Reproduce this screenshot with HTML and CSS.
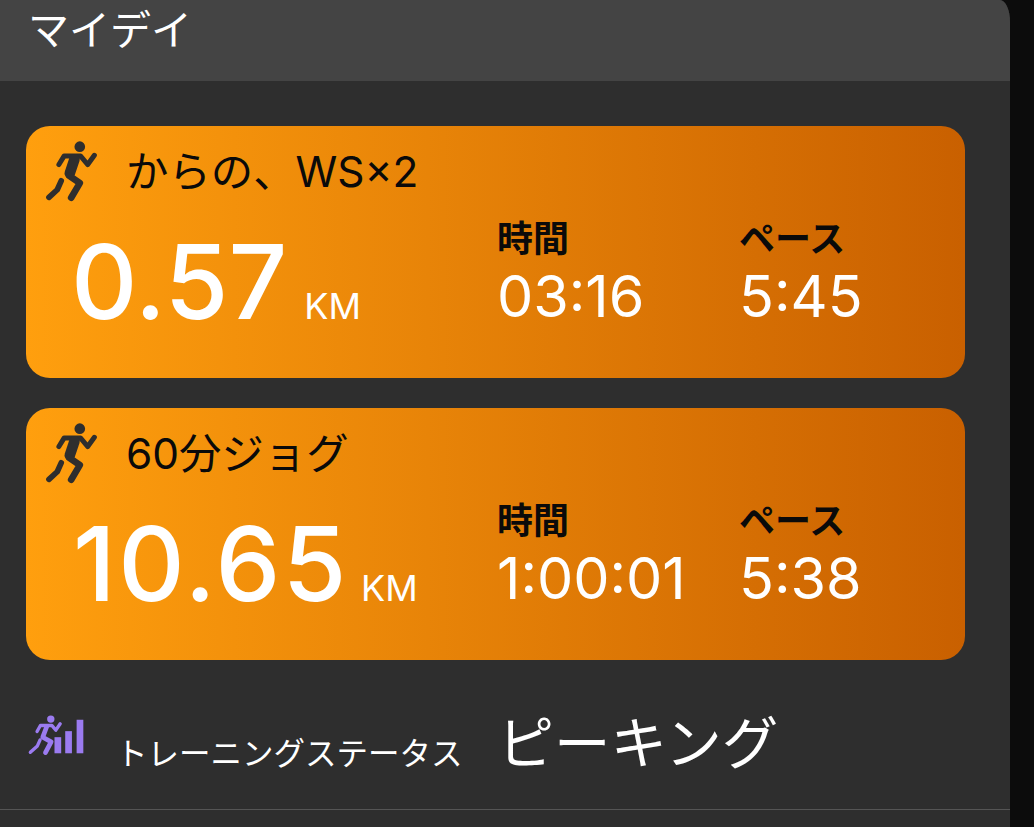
FILE: index.html
```html
<!DOCTYPE html>
<html lang="ja">
<head>
<meta charset="utf-8">
<title>マイデイ</title>
<link rel="stylesheet" href="styles.css">
</head>
<body>
<main class="panel">
  <header class="panel-head">マイデイ</header>
  <section class="cards">
    <article class="card">
      <div class="card-title">
        <svg class="run-icon" viewBox="70 60 170 190"><circle cx="180" cy="80" r="16" fill="#2e2e2e"/><path class="run-limb thin" d="M117 134 L133 108 L182 108 L204 134 L224 106"/><path class="run-limb torso" d="M164 118 L150 160"/><path class="run-limb thick" d="M148 168 L180 190 L154 234"/><path class="run-limb mid" d="M124 183 L112 210 L87 233"/></svg>
        <span>からの、WS×2</span>
      </div>
      <div class="stats">
        <div class="distance"><span class="big">0.57</span><span class="unit">KM</span></div>
        <div class="stat"><div class="label">時間</div><div class="value">03:16</div></div>
        <div class="stat"><div class="label">ペース</div><div class="value">5:45</div></div>
      </div>
    </article>
    <article class="card">
      <div class="card-title">
        <svg class="run-icon" viewBox="70 60 170 190"><circle cx="180" cy="80" r="16" fill="#2e2e2e"/><path class="run-limb thin" d="M117 134 L133 108 L182 108 L204 134 L224 106"/><path class="run-limb torso" d="M164 118 L150 160"/><path class="run-limb thick" d="M148 168 L180 190 L154 234"/><path class="run-limb mid" d="M124 183 L112 210 L87 233"/></svg>
        <span>60分ジョグ</span>
      </div>
      <div class="stats">
        <div class="distance"><span class="big big-long">10.65</span><span class="unit">KM</span></div>
        <div class="stat"><div class="label">時間</div><div class="value">1:00:01</div></div>
        <div class="stat"><div class="label">ペース</div><div class="value">5:38</div></div>
      </div>
    </article>
  </section>
  <section class="status">
    <svg class="status-icon" viewBox="84 70 170 125"><circle cx="152" cy="88" r="11" fill="#9b7bf0"/><path class="status-limb" d="M111 125 L121 107 L155 107 L167 121 L180 102"/><path class="status-limb wide" d="M140 110 L128 142 L153 156 L136 188"/><path class="status-limb" d="M120 150 L112 168 L91 187"/><rect x="163" y="142" width="20" height="48" fill="#9b7bf0"/><rect x="195" y="124" width="20" height="66" fill="#9b7bf0"/><rect x="229" y="90" width="20" height="100" fill="#9b7bf0"/></svg>
    <span class="status-label">トレーニングステータス</span>
    <span class="status-value">ピーキング</span>
  </section>
</main>
</body>
</html>
```
FILE: styles.css
```css
* { box-sizing: border-box; }
html, body { margin: 0; height: 100%; overflow: hidden; background: #0c0c0c; }
body {
  font-family: Inter, "Noto Sans CJK JP", sans-serif;
}
.panel {
  width: 1010px;
  height: 827px;
  background: #2e2e2e;
  border-top-right-radius: 10px 22px;
  overflow: hidden;
  display: flex;
  flex-direction: column;
}
.panel-head {
  height: 81px;
  flex: none;
  background: #444444;
  color: #fff;
  font-family: "Noto Sans CJK JP", sans-serif;
  font-size: 41px;
  line-height: 50px;
  padding: 2px 0 0 28px;
}
.cards {
  display: flex;
  flex-direction: column;
  gap: 30px;
  padding: 45px 45px 0 26px;
}
.card {
  height: 252px;
  border-radius: 24px;
  background: linear-gradient(90deg, #ff9f0e 0%, #c96000 100%);
  padding: 12px 0 0 17px;
}
.card-title {
  display: flex;
  align-items: center;
  gap: 26px;
  height: 66px;
  color: #0a0a0a;
  font-size: 42.4px;
}
.card-title span { margin-top: -5px; }
.run-icon { width: 57px; height: 63px; flex: none; overflow: visible; }
.run-limb { fill: none; stroke: #2e2e2e; stroke-linecap: round; stroke-linejoin: round; }
.run-limb.thin { stroke-width: 15px; }
.run-limb.thick { stroke-width: 20px; }
.run-limb.mid { stroke-width: 17px; }
.run-limb.torso { stroke-width: 32px; }
.stats {
  display: grid;
  grid-template-columns: 455px 242px 1fr;
  margin-top: 16px;
}
.distance {
  display: flex;
  align-items: baseline;
  padding-left: 28px;
  color: #fff;
}
.big { font-size: 103px; font-weight: 500; line-height: 124px; }
.big-long { letter-spacing: 2.5px; margin: 0 -5px 0 2px; }
.unit { font-size: 36px; font-weight: 400; margin-left: 17px; }
.stat { color: #fff; }
.label {
  color: #0a0a0a;
  font-family: "Noto Sans CJK JP", sans-serif;
  font-size: 36px;
  font-weight: 700;
  line-height: 44px;
  margin: -6px 0 0 -1px;
}
.value { font-size: 57.5px; font-weight: 400; line-height: 68px; margin: 4px 0 0 -1px; }
.status {
  height: 150px;
  flex: none;
  display: flex;
  align-items: flex-start;
  border-bottom: 1px solid #555555;
  padding: 53px 0 0 28px;
}
.status-icon { width: 57px; height: 42px; flex: none; overflow: visible; }
.status-limb { fill: none; stroke: #9b7bf0; stroke-width: 10px; stroke-linecap: round; stroke-linejoin: round; }
.status-limb.wide { stroke-width: 14px; }
.status-label {
  color: #fff;
  font-family: "Noto Sans CJK JP", sans-serif;
  font-size: 31.5px;
  line-height: 40px;
  margin: 18px 0 0 31px;
}
.status-value {
  color: #fff;
  font-family: "Noto Sans CJK JP", sans-serif;
  font-size: 56.5px;
  line-height: 72px;
  margin: -10px 0 0 35px;
}
```
